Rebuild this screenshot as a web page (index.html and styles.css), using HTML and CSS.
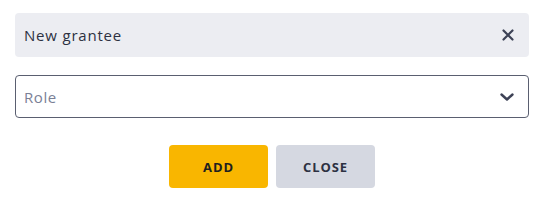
FILE: index.html
```html
<!DOCTYPE html>
<html>
<head>
<meta charset="utf-8">
<link rel="stylesheet" href="styles.css">
</head>
<body>
<div class="dialog">
  <div class="grantee">
    <span class="grantee-name">New grantee</span>
    <button class="icon-btn" aria-label="Remove">
      <svg width="12" height="12" viewBox="0 0 12 12"><path d="M1.5 1.5 L10.5 10.5 M10.5 1.5 L1.5 10.5" stroke="#3d4256" stroke-width="2.2" stroke-linecap="round" fill="none"/></svg>
    </button>
  </div>
  <div class="select">
    <span class="placeholder">Role</span>
    <svg class="chev" width="14" height="8" viewBox="0 0 14 8"><path d="M1.5 1.5 L7 6.5 L12.5 1.5" stroke="#3d4256" stroke-width="2.4" stroke-linecap="round" stroke-linejoin="round" fill="none"/></svg>
  </div>
  <div class="actions">
    <button class="btn btn-primary">ADD</button>
    <button class="btn btn-secondary">CLOSE</button>
  </div>
</div>
</body>
</html>
```
FILE: styles.css
```css
html, body {
  margin: 0;
  padding: 0;
  background: #ffffff;
}
body {
  font-family: "Open Sans", "Noto Sans", sans-serif;
  color: #2d3142;
}
.dialog {
  width: 514px;
  padding: 13px 0 0 15px;
  display: flex;
  flex-direction: column;
}
.grantee {
  height: 44px;
  box-sizing: border-box;
  background: #ecedf2;
  border-radius: 4px;
  display: flex;
  align-items: center;
  justify-content: space-between;
  padding: 0 15px 0 9px;
}
.grantee-name {
  font-size: 15px;
  color: #2d3142;
  letter-spacing: 0.8px;
}
.icon-btn {
  border: none;
  background: none;
  padding: 0;
  width: 12px;
  height: 12px;
  display: flex;
}
.select {
  margin-top: 18px;
  height: 43px;
  box-sizing: border-box;
  border: 1px solid #5a5f70;
  border-radius: 4px;
  display: flex;
  align-items: center;
  justify-content: space-between;
  padding: 0 14px 0 8px;
}
.placeholder {
  font-size: 15px;
  color: #7a8096;
  letter-spacing: 0.6px;
}
.chev {
  display: block;
}
.actions {
  margin-top: 27px;
  display: flex;
  justify-content: center;
  gap: 8px;
}
.btn {
  width: 99px;
  height: 43px;
  border: none;
  border-radius: 4px;
  font-family: "Open Sans", "Noto Sans", sans-serif;
  font-weight: 700;
  font-size: 13px;
  letter-spacing: 0.9px;
  color: #2d3142;
  padding: 0;
}
.btn-primary {
  background: #f9b600;
  color: #1f1f1f;
}
.btn-secondary {
  background: #d5d8e1;
}
```
